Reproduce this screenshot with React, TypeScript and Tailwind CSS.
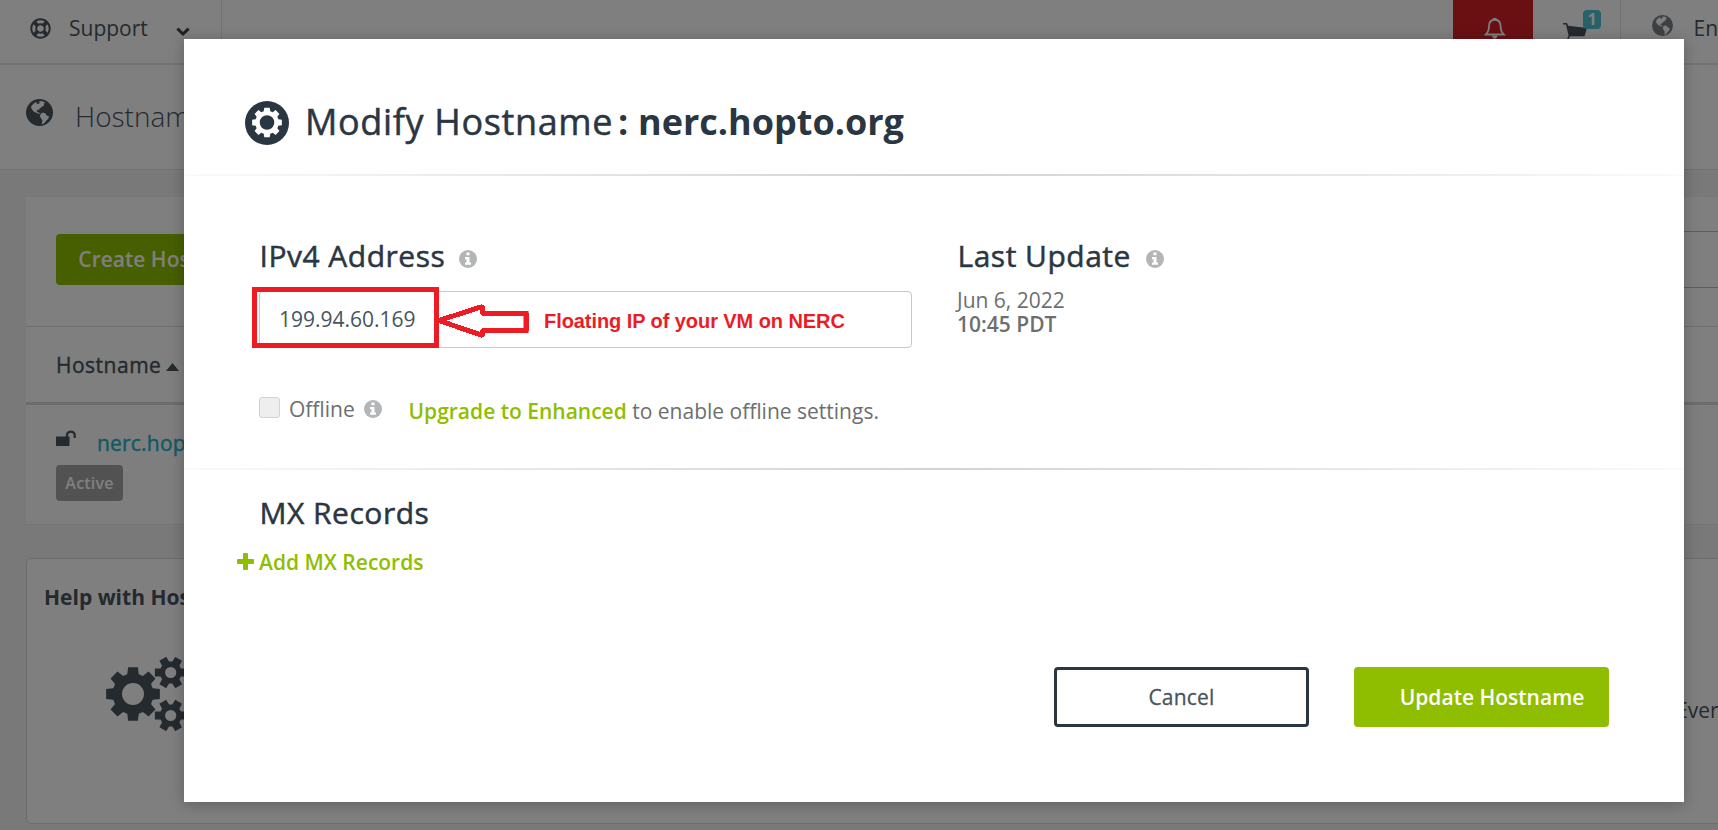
import React from "react";
import { FaRegLifeRing } from "react-icons/fa";

function Globe({ className }: { className: string }) {
  return (
    <svg viewBox="0 0 82 82" className={className}>
      <circle cx="41" cy="41" r="41" fill="currentColor" />
      <path
        fill="#fff"
        d="M16 22 L24 13 L33 8 L31 13 L37 15 L42 12 L39 8 L47 6 L56 9 L58 14 L53 13 L55 19 L48 24 L41 29 L40 33 L35 33 L32 36 L35 40 L40 41 L42 46 L38 45 L31 42 L24 39 L19 33 L16 28 Z"
      />
      <path fill="#fff" d="M46 43 L53 41 L60 45 L62 49 L70 53 L67 61 L61 66 L57 72 L50 77 L48 75 L50 65 L45 58 L42 52 Z" />
    </svg>
  );
}

function gearPath(cx: number, cy: number, outer: number, inner: number, hole: number, teeth: number) {
  const step = (Math.PI * 2) / teeth;
  const at = (r: number, a: number) => `${(cx + r * Math.cos(a)).toFixed(2)} ${(cy + r * Math.sin(a)).toFixed(2)}`;
  const points: string[] = [];
  for (let i = 0; i < teeth; i++) {
    const a = i * step;
    points.push(at(inner, a - step * 0.36), at(outer, a - step * 0.23), at(outer, a + step * 0.23), at(inner, a + step * 0.36));
  }
  return `M${points.join("L")}ZM${cx - hole} ${cy}a${hole} ${hole} 0 1 0 ${hole * 2} 0a${hole} ${hole} 0 1 0 ${-hole * 2} 0Z`;
}

function Cogs() {
  return (
    <svg viewBox="0 0 82 74" className="h-[74px] w-[82px] shrink-0 text-[#49545c]" fill="currentColor" fillRule="evenodd">
      <path d={gearPath(27, 37, 27.3, 20.5, 11, 8)} />
      <path d={gearPath(64.7, 15.5, 16.3, 11, 5.6, 6)} />
      <path d={gearPath(64.7, 58.5, 16.3, 11, 5.6, 6)} />
    </svg>
  );
}

function GearBadge() {
  return (
    <svg viewBox="0 0 44 44" className="h-11 w-11 shrink-0">
      <circle cx="22" cy="22" r="22" fill="#2b3643" />
      <path d={gearPath(22, 21.5, 15.1, 11.8, 7.3, 8)} fill="#fff" fillRule="evenodd" />
    </svg>
  );
}

function Info() {
  return (
    <svg viewBox="0 0 18 18" className="h-[18px] w-[18px] shrink-0">
      <circle cx="9" cy="9" r="9" fill="#b3b5b6" />
      <path fill="#fff" d="M7.4 2.6h3.1v2.6H7.4zM6 7h4.5v5.6H12v2.2H6v-2.2h1.5V9.2H6z" />
    </svg>
  );
}

function Divider() {
  return <div className="h-[2px] shrink-0 bg-linear-to-r from-[#fafafa] via-[#d2d2d2] to-[#fafafa]" />;
}

function SectionTitle({ children }: { children: React.ReactNode }) {
  return (
    <h3 className="pl-[0.5px] text-[30px] leading-[40px] tracking-[0.5px] whitespace-nowrap text-[#2b3643] [-webkit-text-stroke:0.5px_#2b3643]">
      {children}
    </h3>
  );
}

function Background() {
  return (
    <div className="flex h-full w-full flex-col bg-[#f2f2f2] text-[#49545c]">
      <header className="flex h-[65px] shrink-0 border-b-2 border-[#e4e4e4] bg-white text-[21px] leading-[56px]">
        <div className="flex w-[222px] border-r border-[#e4e4e4] pl-[30px]">
          <FaRegLifeRing className="mt-[18px] h-[21px] w-[21px] text-[#49545c]" />
          <span className="ml-[18px] w-[79px]">Support</span>
          <svg viewBox="0 0 14 10" className="mt-[27px] ml-[28px] h-[10px] w-[14px]">
            <path d="M1.4 1.6L7 7l5.6-5.4" fill="none" stroke="#3d464e" strokeWidth="3" />
          </svg>
        </div>
        <div className="flex-1" />
        <div className="h-full w-20 bg-[#d42027]">
          <svg viewBox="0 0 22 24" className="mt-[17px] ml-[31px] h-6 w-[22px]">
            <path d="M10.8 2.5C6.4 3 5 6.3 5 9.3c0 4.6-1.3 6.4-3.2 8.2h18c-1.9-1.8-3.2-3.6-3.2-8.2 0-3-1.4-6.3-5.8-6.8z" fill="none" stroke="#fff" strokeWidth="1.8" />
            <path d="M9 1h3.5v2H9zM7.5 18.5h6.5l-2 3H9.5z" fill="#fff" />
          </svg>
        </div>
        <div className="relative w-[88px] border-r border-[#e4e4e4]">
          <svg viewBox="0 0 26 22" className="mt-[22px] ml-[30px] h-[22px] w-[26px]" fill="#49545c">
            <path d="M0 1h4l1.2 2.8L24 6l-2.5 8.3H7.2L5 18H3.8L5.6 13.500 2.900 2.400H0z" />
          </svg>
          <span className="absolute top-[10px] left-[50px] h-[19px] w-[18px] rounded-[4px] bg-[#4fc3d3] text-center text-[16px] leading-[18px] font-bold text-white">
            1
          </span>
        </div>
        <div className="flex w-[97px] overflow-hidden pl-[31px]">
          <Globe className="mt-[15px] h-[21px] w-[21px] shrink-0 text-[#7c8287]" />
          <span className="ml-[20.5px] shrink-0">English</span>
        </div>
      </header>

      <div className="flex h-[105px] shrink-0 border-b border-[#e0e0e0] bg-white pl-[26px]">
        <Globe className="mt-[34px] h-[27px] w-[27px]" />
        <h1 className="ml-[22px] text-[28px] leading-[102px] font-light">Hostnames</h1>
      </div>

      <section className="mt-[27px] ml-[26px] h-[328px] shrink-0 border-b border-[#e8e8e8] bg-[#fdfdfd]">
        <div className="flex h-[130px] border-b border-[#dcdcdc] bg-white pt-[37px] pl-[30px]">
          <button className="h-[51px] w-[222px] rounded-[4px] bg-[#8fbe00] text-[21px] font-semibold text-white">Create Hostname</button>
          <div className="mt-[-3px] mr-[-4px] ml-auto h-[57px] w-[180px] border border-[#b8bcbf]" />
        </div>
        <div className="flex h-[78px] border-b-[3px] border-[#d8d8d8] bg-white pl-[30px] text-[21px] leading-[77px] tracking-[0.5px] [-webkit-text-stroke:0.4px_#49545c]">
          Hostname
          <svg viewBox="0 0 13 8" className="mt-[36px] ml-[5px] h-2 w-[13px]" fill="currentColor">
            <path d="M0 8L6.500 0 13 8z" />
          </svg>
        </div>
        <div className="flex pt-[24px] pl-[30px]">
          <svg viewBox="0 0 20 17" className="h-[17px] w-5" fill="#49545c">
            <path d="M0 7.500h13.500v9.500H0z" />
            <path d="M11 8V5.500a4 4 0 0 1 7.700 0V9" fill="none" stroke="#49545c" strokeWidth="2.200" />
          </svg>
          <span className="mt-px ml-[21px] text-[21px] leading-[26px] tracking-[0.2px] text-[#22b4c6] [-webkit-text-stroke:0.4px_#22b4c6]">
            nerc.hopto.org
          </span>
        </div>
        <div className="mt-[9px] ml-[30px] h-9 w-[67px] rounded-[4px] bg-[#a5a5a5] text-center text-[16px] leading-9 font-semibold tracking-[0.2px] text-white">
          Active
        </div>
      </section>

      <section className="mt-[33px] mr-[-20px] ml-[26px] h-[266px] shrink-0 rounded-[5px] border border-[#d9d9d9] bg-white">
        <h2 className="mt-[23px] ml-[17px] text-[21px] leading-[30px] font-bold text-[#49545c]">Help with Hostnames</h2>
        <div className="mt-[45px] ml-[79px] flex">
          <Cogs />
          <span className="mt-[41px] ml-[1488px] text-[21px] leading-[24px]">Every</span>
        </div>
      </section>
    </div>
  );
}

function RedAnnotation() {
  return (
    <div className="absolute top-[-5px] left-[-8px] flex h-[61px]">
      <div className="w-[187px] border-[5px] border-[#ed1c24]" />
      <svg viewBox="0 0 92 36" className="mt-[16px] h-9 w-[92px] overflow-visible">
        <path
          d="M0 17.500L43.500 3.500V10.500H87V27.500H43.500V32.500L0 17.500"
          fill="none"
          stroke="#ed1c24"
          strokeWidth="5"
          strokeLinejoin="bevel"
          shapeRendering="crispEdges"
        />
        <path d="M84.500 8h5v22h-5zM41 8h5v3h-5zM41 27h5v3h-5z" fill="#ed1c24" />
      </svg>
      <span className="mt-[23px] ml-[13px] font-['Liberation_Sans',Arial,sans-serif] text-[20px] leading-[22px] font-bold tracking-[-0.07px] whitespace-nowrap text-[#ed1c24]">
        Floating IP of your VM on NERC
      </span>
    </div>
  );
}

function Modal() {
  return (
    <div className="absolute top-[39px] left-[184px] flex h-[763px] w-[1500px] flex-col bg-white text-[21px] text-[#6c6f70] shadow-[0_2px_14px_rgba(0,0,0,0.25)]">
      <div className="flex h-[135px] shrink-0 pt-[62px] pl-[61px]">
        <GearBadge />
        <h2 className="mt-[-3px] ml-[16px] flex text-[36px] leading-[48px] text-[#2b3643]">
          <span className="w-[313px] tracking-[0.65px] whitespace-nowrap [-webkit-text-stroke:0.5px_#2b3643]">Modify Hostname</span>
          <span className="w-[20px] font-bold">:</span>
          <span className="font-bold">nerc.hopto.org</span>
        </h2>
      </div>
      <Divider />

      <div className="flex h-[292px] shrink-0 pt-[60px] pl-[75px]">
        <div className="w-[698px]">
          <div className="flex h-[40px] items-center">
            <div className="w-[200px]"><SectionTitle>IPv4 Address</SectionTitle></div>
            <span className="mt-[6px]"><Info /></span>
          </div>
          <div className="relative mt-[15px] h-[57px] w-[653px] rounded-[4px] border border-[#c6c8c9] pl-[19px] leading-[54px] text-[#49545f]">
            199.94.60.169
            <RedAnnotation />
          </div>
          <div className="mt-[49px] flex">
            <span className="h-[21px] w-[21px] rounded-[3px] border border-[#d2d2d2] bg-[#eeeeee]" />
            <span className="ml-[9px] w-[75px] leading-[24px]">Offline</span>
            <span className="mt-[3px]"><Info /></span>
            <p className="ml-[26.5px] leading-[28px] whitespace-nowrap">
              <a className="font-semibold text-[#8fbe00]">Upgrade to Enhanced</a> to enable offline settings.
            </p>
          </div>
        </div>
        <div>
          <div className="flex h-[40px] items-center">
            <div className="w-[189px]"><SectionTitle>Last Update</SectionTitle></div>
            <span className="mt-[6px]"><Info /></span>
          </div>
          <div className="mt-[12px] leading-[24px]">
            <div>Jun 6, 2022</div>
            <div className="font-semibold">10:45 PDT</div>
          </div>
        </div>
      </div>
      <Divider />

      <div className="h-[197px] shrink-0 pt-[23px]">
        <div className="ml-[75px]"><SectionTitle>MX Records</SectionTitle></div>
        <div className="mt-[15px] ml-[53px] flex font-semibold text-[#8fbe00]">
          <svg viewBox="0 0 17 17" className="mt-[5px] h-[17px] w-[17px]" fill="currentColor">
            <rect x="0" y="6" width="17" height="5" rx="1" />
            <rect x="6" y="0" width="5" height="17" rx="1" />
          </svg>
          <span className="ml-[5px] leading-[28px]">Add MX Records</span>
        </div>
      </div>

      <div className="flex gap-[45px] pl-[870px]">
        <button className="h-[60px] w-[255px] rounded-[4px] border-[3px] border-[#2b3643] pt-[2px] tracking-[0.2px] text-[#49545c] [-webkit-text-stroke:0.3px_#49545c]">
          Cancel
        </button>
        <button className="h-[60px] w-[255px] rounded-[4px] bg-[#8fbe00] pt-[2px] pl-[21px] font-semibold text-white">Update Hostname</button>
      </div>
    </div>
  );
}

export default function App() {
  return (
    <div className="relative h-[830px] w-[1718px] overflow-hidden font-['Open_Sans','Noto_Sans',sans-serif]">
      <Background />
      <div className="absolute inset-0 bg-black/50" />
      <Modal />
    </div>
  );
}
